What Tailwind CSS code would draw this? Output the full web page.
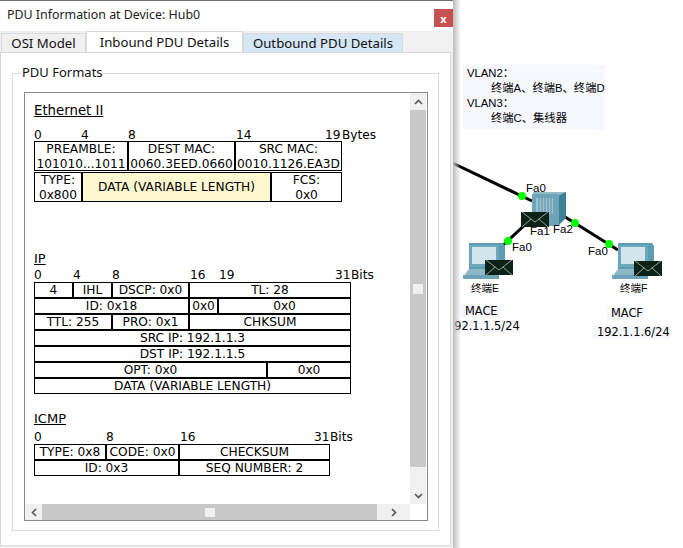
<!DOCTYPE html>
<html lang="zh">
<head>
    <meta charset="UTF-8">
    <title>PDU Information at Device: Hub0</title>
    <script src="https://cdn.jsdelivr.net/npm/@tailwindcss/browser@4"></script>
</head>
<body class="bg-white">
<div class="relative w-[683px] h-[548px] overflow-hidden bg-white font-['Liberation_Sans','Noto_Sans_CJK_SC',sans-serif] text-black">

    <!-- topology canvas -->
    <div class="absolute left-[463px] top-[65px] w-[142px] h-[65px] bg-[#f6f8fe] text-[11.3px] leading-[15px] pt-[1px] pl-[4px]">
        <div>VLAN2：</div>
        <div class="pl-[24px] whitespace-nowrap">终端A、终端B、终端D</div>
        <div>VLAN3：</div>
        <div class="pl-[24px] whitespace-nowrap">终端C、集线器</div>
    </div>

    <svg class="absolute left-0 top-0" width="683" height="548" viewBox="0 0 683 548">
        <line x1="440" y1="157" x2="532" y2="201" stroke="#000" stroke-width="3"/>
        <line x1="530" y1="220" x2="498" y2="250" stroke="#000" stroke-width="3"/>
        <line x1="562" y1="215" x2="618" y2="250" stroke="#000" stroke-width="3"/>
        <circle cx="522" cy="196" r="4" fill="#0f0"/>
        <circle cx="575" cy="223" r="4" fill="#0f0"/>
        <circle cx="609" cy="244" r="4" fill="#0f0"/>
        <circle cx="508" cy="241" r="4" fill="#0f0"/>

        <!-- hub -->
        <polygon points="558,192 566,192 566,218 558,226" fill="#3f8097"/>
        <polygon points="533,192 540,192 566,192 558,196 533,196" fill="#8fbccb"/>
        <rect x="532" y="194" width="27" height="32" fill="#6fa3b6"/>
        <rect x="536" y="198" width="17" height="16" fill="#9cc2d0"/>
        <path d="M539 198v16M542 198v16M545 198v16M548 198v16M551 198v16" stroke="#5a8ea3" stroke-width="1"/>

        <!-- pc E -->
        <g>
            <polygon points="469,243 503,243 505,246 505,264 500,269 469,269" fill="#5c9db3"/>
            <rect x="469" y="245" width="30" height="22" fill="#6ba8bc"/>
            <rect x="472" y="247" width="24" height="17" fill="#d3e4ec"/>
            <polygon points="469,269 500,269 505,272 505,274 463,278 463,277" fill="#8db8c8"/>
            <rect x="463" y="275" width="36" height="4" fill="#6fa3b6"/>
        </g>
        <!-- pc F -->
        <g transform="translate(149 0)">
            <polygon points="469,243 503,243 505,246 505,264 500,269 469,269" fill="#5c9db3"/>
            <rect x="469" y="245" width="30" height="22" fill="#6ba8bc"/>
            <rect x="472" y="247" width="24" height="17" fill="#d3e4ec"/>
            <polygon points="469,269 500,269 505,272 505,274 463,278 463,277" fill="#8db8c8"/>
            <rect x="463" y="275" width="36" height="4" fill="#6fa3b6"/>
        </g>

        <!-- envelopes -->
        <g fill="#0c2218" stroke="#8fa39a" stroke-width="1">
            <g>
                <rect x="521" y="212" width="28" height="15" stroke="none"/>
                <path d="M522 212l13 10 13-10M522 227l9-8M548 227l-9-8" fill="none"/>
            </g>
            <g>
                <rect x="485" y="260" width="28" height="15" stroke="none"/>
                <path d="M486 260l13 10 13-10M486 275l9-8M512 275l-9-8" fill="none"/>
            </g>
            <g>
                <rect x="634" y="261" width="28" height="15" stroke="none"/>
                <path d="M635 261l13 10 13-10M635 276l9-8M661 276l-9-8" fill="none"/>
            </g>
        </g>
    </svg>

    <span class="absolute left-[526px] top-[181px] text-[11.5px] leading-[14px]">Fa0</span>
    <span class="absolute left-[530px] top-[224px] text-[11.5px] leading-[14px]">Fa1</span>
    <span class="absolute left-[553px] top-[222px] text-[11.5px] leading-[14px]">Fa2</span>
    <span class="absolute left-[512px] top-[240px] text-[11.5px] leading-[14px]">Fa0</span>
    <span class="absolute left-[588px] top-[244px] text-[11.5px] leading-[14px]">Fa0</span>
    <span class="absolute left-[471px] top-[281px] text-[10.5px] leading-[14px]">终端E</span>
    <span class="absolute left-[620px] top-[281px] text-[10.5px] leading-[14px]">终端F</span>
    <div class="font-['DejaVu_Sans',sans-serif] text-[11.4px] leading-[13px]">
        <span class="absolute left-[461px] top-[305px] pl-[4px] pr-[1px] bg-[#f6f8fe]">MACE</span>
        <span class="absolute left-[444px] top-[320px] pl-[3px] bg-[#f6f8fe] whitespace-nowrap">192.1.1.5/24</span>
        <span class="absolute left-[607px] top-[307px] pl-[4px] pr-[1px] bg-[#f6f8fe]">MACF</span>
        <span class="absolute left-[592px] top-[326px] pl-[5px] bg-[#f6f8fe] whitespace-nowrap">192.1.1.6/24</span>
    </div>

    <!-- window shadow -->
    <div class="absolute left-[453px] top-0 w-[8px] h-[548px] bg-gradient-to-r from-[#bcbcbc] to-transparent"></div>

    <!-- PDU dialog -->
    <div class="absolute left-0 top-0 w-[453px] h-[548px] bg-[#f0f0f0] border-t border-t-[#6e6e6e] flex flex-col font-['Noto_Sans','Liberation_Sans',sans-serif]">
        <div class="h-[30px] shrink-0 bg-white flex items-start justify-between">
            <span class="pl-[7px] pt-[6px] text-[12.4px] leading-[16px] text-[#222]">PDU Information at Device: Hub0</span>
            <div class="w-[19px] h-[18px] mt-[8px] bg-[#c75050] text-white flex items-center justify-center text-[11px] font-bold leading-none">x</div>
        </div>

        <div class="h-[21px] shrink-0 flex items-end text-[13.2px] leading-[18px] text-[#111] pl-[1px]">
            <div class="w-[85px] h-[19px] border border-b-0 border-[#d9d9d9] text-center">OSI Model</div>
            <div class="w-[157px] h-[21px] bg-white border border-b-0 border-[#d9d9d9] text-center pt-[1px]">Inbound PDU Details</div>
            <div class="w-[160px] h-[19px] bg-[#d5e6f6] border border-b-0 border-[#d9d9d9] text-center">Outbound PDU Details</div>
        </div>

        <div class="w-[451px] h-[494px] shrink-0 bg-white border border-[#d9d9d9] pl-[11px] pt-[11px]">
            <fieldset class="w-[427px] h-[467px] border border-[#d9d9d9] pl-[11px]">
                <legend class="-ml-[3px] px-[1px] pb-[2px] text-[13px] leading-[16px] text-[#111]">PDU Formats</legend>

                <div class="w-[404px] h-[429px] mt-[10px] border border-[#8a8a96] flex flex-col font-['DejaVu_Sans',sans-serif] text-[12.2px] leading-[14px]">
                    <div class="flex h-[411px]">
                        <div class="w-[385px] pl-[9px] pt-[11px]">
                            <!-- Ethernet -->
                            <div class="underline text-[13.3px] h-[14px] mb-[9px]">Ethernet II</div>
                            <div class="flex h-[13px] mb-[1px] pt-[1px]">
                                <span class="w-[47px]">0</span><span class="w-[47px]">4</span><span class="w-[108px]">8</span><span class="w-[89px]">14</span><span class="w-[17px]">19</span><span>Bytes</span>
                            </div>
                            <div class="w-[308px] text-center leading-[15px] whitespace-nowrap">
                                <div class="flex h-[30px] mb-[1px]">
                                    <div class="w-[94px] border border-black">PREAMBLE:<br>101010...1011</div>
                                    <div class="w-[107px] border border-black">DEST MAC:<br>0060.3EED.0660</div>
                                    <div class="w-[107px] border border-black">SRC MAC:<br>0010.1126.EA3D</div>
                                </div>
                                <div class="flex h-[30px]">
                                    <div class="w-[48px] border border-black">TYPE:<br>0x800</div>
                                    <div class="w-[189px] border border-black bg-[#fef8d0] flex items-center justify-center">DATA (VARIABLE LENGTH)</div>
                                    <div class="w-[71px] border border-black">FCS:<br>0x0</div>
                                </div>
                            </div>

                            <!-- IP -->
                            <div class="underline text-[13px] h-[14px] mt-[50px] mb-[2px]">IP</div>
                            <div class="flex h-[13px] mb-[1px]">
                                <span class="w-[39px]">0</span><span class="w-[39px]">4</span><span class="w-[78px]">8</span><span class="w-[29px]">16</span><span class="w-[116px]">19</span><span class="w-[16px]">31</span><span>Bits</span>
                            </div>
                            <div class="w-[317px] text-center whitespace-nowrap">
                                <div class="flex h-[16px]">
                                    <div class="w-[39px] border border-black leading-[14px]">4</div>
                                    <div class="w-[39px] border border-black leading-[14px]">IHL</div>
                                    <div class="w-[77px] border border-black leading-[14px]">DSCP: 0x0</div>
                                    <div class="w-[162px] border border-black leading-[14px]">TL: 28</div>
                                </div>
                                <div class="flex h-[16px]">
                                    <div class="w-[155px] border border-black leading-[14px]">ID: 0x18</div>
                                    <div class="w-[29px] border border-black leading-[14px]">0x0</div>
                                    <div class="w-[133px] border border-black leading-[14px]">0x0</div>
                                </div>
                                <div class="flex h-[16px]">
                                    <div class="w-[78px] border border-black leading-[14px]">TTL: 255</div>
                                    <div class="w-[77px] border border-black leading-[14px]">PRO: 0x1</div>
                                    <div class="w-[162px] border border-black leading-[14px]">CHKSUM</div>
                                </div>
                                <div class="h-[16px] border border-black leading-[14px]">SRC IP: 192.1.1.3</div>
                                <div class="h-[16px] border border-black leading-[14px]">DST IP: 192.1.1.5</div>
                                <div class="flex h-[16px]">
                                    <div class="w-[233px] border border-black leading-[14px]">OPT: 0x0</div>
                                    <div class="w-[84px] border border-black leading-[14px]">0x0</div>
                                </div>
                                <div class="h-[16px] border border-black leading-[14px]">DATA (VARIABLE LENGTH)</div>
                            </div>

                            <!-- ICMP -->
                            <div class="underline text-[13px] h-[14px] mt-[18px] mb-[4px]">ICMP</div>
                            <div class="flex h-[13px] mb-[1px]">
                                <span class="w-[72px]">0</span><span class="w-[74px]">8</span><span class="w-[134px]">16</span><span class="w-[16px]">31</span><span>Bits</span>
                            </div>
                            <div class="w-[296px] text-center whitespace-nowrap">
                                <div class="flex h-[16px]">
                                    <div class="w-[72px] border border-black leading-[14px]">TYPE: 0x8</div>
                                    <div class="w-[73px] border border-black leading-[14px]">CODE: 0x0</div>
                                    <div class="w-[151px] border border-black leading-[14px]">CHECKSUM</div>
                                </div>
                                <div class="flex h-[16px]">
                                    <div class="w-[145px] border border-black leading-[14px]">ID: 0x3</div>
                                    <div class="w-[151px] border border-black leading-[14px]">SEQ NUMBER: 2</div>
                                </div>
                            </div>
                        </div>

                        <!-- vertical scrollbar -->
                        <div class="w-[16px] h-[411px] bg-[#f0f0f0] flex flex-col">
                            <div class="h-[17px] flex items-center justify-center">
                                <svg width="9" height="6" viewBox="0 0 9 6"><path d="M1 5l3.5-3.5L8 5" fill="none" stroke="#555" stroke-width="1.6"/></svg>
                            </div>
                            <div class="h-[357px] bg-[#c8c8c8] flex items-center justify-center">
                                <div class="w-[10px] h-[10px] bg-[#f0f0f0]"></div>
                            </div>
                            <div class="flex-1 flex items-end justify-center pb-[5px]">
                                <svg width="9" height="6" viewBox="0 0 9 6"><path d="M1 1l3.5 3.5L8 1" fill="none" stroke="#555" stroke-width="1.6"/></svg>
                            </div>
                        </div>
                    </div>

                    <!-- horizontal scrollbar -->
                    <div class="h-[16px] flex">
                        <div class="w-[385px] bg-[#f0f0f0] flex items-center">
                            <div class="w-[17px] flex justify-center">
                                <svg width="6" height="9" viewBox="0 0 6 9"><path d="M5 1L1.5 4.5 5 8" fill="none" stroke="#555" stroke-width="1.6"/></svg>
                            </div>
                            <div class="w-[335px] h-[16px] bg-[#c8c8c8] flex items-center justify-center">
                                <div class="w-[10px] h-[9px] bg-[#f0f0f0]"></div>
                            </div>
                            <div class="flex-1 flex justify-center">
                                <svg width="6" height="9" viewBox="0 0 6 9"><path d="M1 1l3.5 3.5L1 8" fill="none" stroke="#555" stroke-width="1.6"/></svg>
                            </div>
                        </div>
                    </div>
                </div>
            </fieldset>
        </div>
    </div>
</div>
</body>
</html>
